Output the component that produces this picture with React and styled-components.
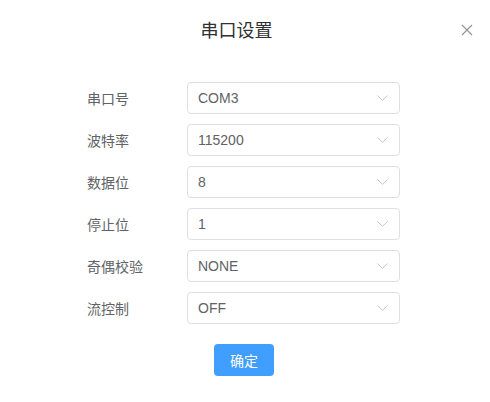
import React from "react";
import styled, { createGlobalStyle } from "styled-components";

const Global = createGlobalStyle`
  html, body { margin: 0; padding: 0; background: #fff; }
  body { font-family: "Helvetica Neue", Helvetica, "Liberation Sans", "Noto Sans CJK SC", sans-serif; }
`;

const Dialog = styled.div`
  width: 490px;
  height: 402px;
  background: #fff;
  box-sizing: border-box;
`;

const Header = styled.div`
  position: relative;
  display: flex;
  justify-content: center;
  padding: 19px 17px 0 0;
  height: 63px;
  box-sizing: border-box;
`;

const Title = styled.span`
  font-size: 18px;
  line-height: 24px;
  color: #303133;
  font-family: "Liberation Sans", "Noto Sans CJK SC", sans-serif;
`;

const Close = styled.button`
  position: absolute;
  top: 23px;
  right: 17px;
  width: 13px;
  height: 13px;
  padding: 0;
  border: 0;
  background: transparent;
  display: flex;
  align-items: center;
  justify-content: center;
`;

const Form = styled.div`
  display: flex;
  flex-direction: column;
  gap: 10px;
  padding: 19px 0 0 87px;
`;

const Row = styled.div`
  display: flex;
  align-items: center;
  height: 32px;
`;

const Label = styled.label`
  width: 100px;
  font-size: 14px;
  color: #606266;
  font-family: "Liberation Sans", "Noto Sans CJK SC", sans-serif;
`;

const Select = styled.div`
  width: 213px;
  height: 32px;
  box-sizing: border-box;
  border: 1px solid #dcdfe6;
  border-radius: 4px;
  display: flex;
  align-items: center;
  justify-content: space-between;
  padding: 0 11px 0 10px;
  font-size: 14px;
  color: #606266;
  font-family: "Liberation Sans", sans-serif;
`;

const Footer = styled.div`
  display: flex;
  justify-content: center;
  padding: 20px 0 0 0;
`;

const Button = styled.button`
  width: 60px;
  height: 32px;
  border: 0;
  border-radius: 4px;
  background: #409eff;
  color: #fff;
  font-size: 14px;
  padding: 0;
  font-family: "Liberation Sans", "Noto Sans CJK SC", sans-serif;
  margin-left: -2px;
`;

const Chevron = () => (
  <svg width="11" height="6" viewBox="0 0 11 6" fill="none">
    <path d="M0.5 0.5 L5.5 5.3 L10.5 0.5" stroke="#c0c4cc" strokeWidth="1" />
  </svg>
);

const rows = [
  ["串口号", "COM3"],
  ["波特率", "115200"],
  ["数据位", "8"],
  ["停止位", "1"],
  ["奇偶校验", "NONE"],
  ["流控制", "OFF"],
];

export default function App() {
  return (
    <>
      <Global />
      <Dialog>
        <Header>
          <Title>串口设置</Title>
          <Close aria-label="close">
            <svg width="12" height="12" viewBox="0 0 12 12">
              <path d="M1 1 L11 11 M11 1 L1 11" stroke="#909399" strokeWidth="1.1" />
            </svg>
          </Close>
        </Header>
        <Form>
          {rows.map(([l, v]) => (
            <Row key={l}>
              <Label>{l}</Label>
              <Select>
                <span>{v}</span>
                <Chevron />
              </Select>
            </Row>
          ))}
        </Form>
        <Footer>
          <Button>确定</Button>
        </Footer>
      </Dialog>
    </>
  );
}
